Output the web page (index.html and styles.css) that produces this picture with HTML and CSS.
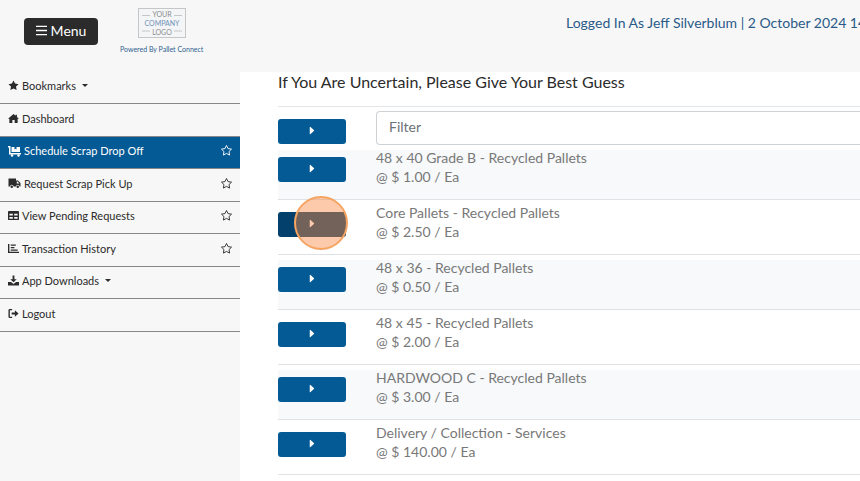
FILE: index.html
```html
<!DOCTYPE html>
<html lang="en">
<head>
    <meta charset="UTF-8">
    <meta name="viewport" content="width=device-width, initial-scale=1.0">
    <title>Schedule Scrap Drop Off</title>
    <link rel="stylesheet" href="styles.css">
</head>
<body>
    <!-- shared icons -->
    <svg class="sprite" aria-hidden="true">
        <symbol id="star" viewBox="0 0 24 24"><path d="M12 1l3.400 6.900 7.600 1.100-5.500 5.400 1.300 7.600L12 18.400 5.200 22l1.300-7.600L1 9l7.600-1.100z"/></symbol>
        <symbol id="play" viewBox="0 0 8 12"><path d="M1 1.500v9q0 1 1 .3l4.500-4.100q.8-.7 0-1.400L2 1.200q-1-.7-1 .3z"/></symbol>
    </svg>

    <header class="topbar">
        <button type="button" class="menu-button">
            <svg class="menu-icon" viewBox="0 0 12 12"><path d="M0 1.500h12M0 6h12M0 10.500h12"/></svg>
            Menu
        </button>
        <a href="#" class="brand">
            <svg class="logo" viewBox="0 0 50 32" role="img" aria-label="Your Company Logo">
                <rect class="logo-frame" x="1.500" y="1.500" width="47" height="29"/>
                <path class="logo-lines" d="M5 8.500h8M37 8.500h8M5 24h8M37 24h8"/>
                <text x="25" y="10">YOUR</text>
                <text x="25" y="19" class="logo-blue">COMPANY</text>
                <text x="25" y="28">LOGO</text>
            </svg>
            <span>Powered By Pallet Connect</span>
        </a>
        <div class="login-info">Logged In As Jeff Silverblum | 2 October 2024 14:05</div>
    </header>

    <div class="page">
        <nav class="sidebar">
            <ul>
                <li><a href="#">
                    <svg class="icon" viewBox="0 0 24 24"><use href="#star"/></svg>
                    Bookmarks <span class="caret"></span>
                </a></li>
                <li><a href="#">
                    <svg class="icon" viewBox="0 0 24 24"><path d="M12 2L0 12.500h3V22h6.500v-7h5v7H21v-9.500h3L19.500 8.500V4h-3v2z"/></svg>
                    Dashboard
                </a></li>
                <li class="active">
                    <a href="#">
                        <svg class="icon wide" viewBox="0 0 26 24"><path d="M0 2h5v14h21v3H2V5H0zM7 4h6v5l2-1.500L17 9V4h7v10H7z"/><circle cx="8" cy="21" r="2.500"/><circle cx="21" cy="21" r="2.500"/></svg>
                        Schedule Scrap Drop Off
                    </a>
                    <button type="button" class="bookmark" aria-label="Bookmark"><svg viewBox="0 0 24 24"><use href="#star"/></svg></button>
                </li>
                <li>
                    <a href="#">
                        <svg class="icon wide" viewBox="0 0 26 24"><path d="M1 3h15v4h4l5 5v7h-2a3.500 3.500 0 0 0-7 0h-5a3.500 3.500 0 0 0-7 0H1zM17.500 9v4H23l-4-4z" fill-rule="evenodd"/><circle cx="7.500" cy="19.500" r="2.500"/><circle cx="19.500" cy="19.500" r="2.500"/></svg>
                        Request Scrap Pick Up
                    </a>
                    <button type="button" class="bookmark" aria-label="Bookmark"><svg viewBox="0 0 24 24"><use href="#star"/></svg></button>
                </li>
                <li>
                    <a href="#">
                        <svg class="icon" viewBox="0 0 24 24"><path fill-rule="evenodd" d="M2 2h20q2 0 2 2v16q0 2-2 2H2q-2 0-2-2V4q0-2 2-2zM3 8v4h7.500V8zM13.500 8v4H21V8zM3 15v4h7.500v-4zM13.500 15v4H21v-4z"/></svg>
                        View Pending Requests
                    </a>
                    <button type="button" class="bookmark" aria-label="Bookmark"><svg viewBox="0 0 24 24"><use href="#star"/></svg></button>
                </li>
                <li>
                    <a href="#">
                        <svg class="icon" viewBox="0 0 24 24"><path d="M0 2h3v17h21v3H0zM6 3h11v3H6zM6 8.500h8v3H6zM6 14h15v3H6z"/></svg>
                        Transaction History
                    </a>
                    <button type="button" class="bookmark" aria-label="Bookmark"><svg viewBox="0 0 24 24"><use href="#star"/></svg></button>
                </li>
                <li><a href="#">
                    <svg class="icon" viewBox="0 0 24 24"><path d="M10 1h4v8h5l-7 7-7-7h5zM0 15h6.500l5.500 4.500 5.500-4.500H24v8H0z"/></svg>
                    App Downloads <span class="caret"></span>
                </a></li>
                <li><a href="#">
                    <svg class="icon" viewBox="0 0 24 24"><path d="M9 2v3H4v14h5v3H4q-3 0-3-3V5q0-3 3-3zM15 5l8 7-8 7v-5H8v-4h7z"/></svg>
                    Logout
                </a></li>
            </ul>
        </nav>

        <main class="content">
            <h1>If You Are Uncertain, Please Give Your Best Guess</h1>
            <div class="filter-row">
                <button type="button" class="go" aria-label="Apply filter"><svg viewBox="0 0 8 12"><use href="#play"/></svg></button>
                <input type="text" class="filter" placeholder="Filter" aria-label="Filter">
            </div>
            <div class="item">
                <button type="button" class="go" aria-label="Select"><svg viewBox="0 0 8 12"><use href="#play"/></svg></button>
                <p>48 x 40 Grade B - Recycled Pallets<br>@ $ 1.00 / Ea</p>
            </div>
            <div class="item">
                <button type="button" class="go pressed" aria-label="Select"><svg viewBox="0 0 8 12"><use href="#play"/></svg></button>
                <p>Core Pallets - Recycled Pallets<br>@ $ 2.50 / Ea</p>
            </div>
            <div class="item">
                <button type="button" class="go" aria-label="Select"><svg viewBox="0 0 8 12"><use href="#play"/></svg></button>
                <p>48 x 36 - Recycled Pallets<br>@ $ 0.50 / Ea</p>
            </div>
            <div class="item">
                <button type="button" class="go" aria-label="Select"><svg viewBox="0 0 8 12"><use href="#play"/></svg></button>
                <p>48 x 45 - Recycled Pallets<br>@ $ 2.00 / Ea</p>
            </div>
            <div class="item">
                <button type="button" class="go" aria-label="Select"><svg viewBox="0 0 8 12"><use href="#play"/></svg></button>
                <p>HARDWOOD C - Recycled Pallets<br>@ $ 3.00 / Ea</p>
            </div>
            <div class="item">
                <button type="button" class="go" aria-label="Select"><svg viewBox="0 0 8 12"><use href="#play"/></svg></button>
                <p>Delivery / Collection - Services<br>@ $ 140.00 / Ea</p>
            </div>
        </main>
    </div>
</body>
</html>
```
FILE: styles.css
```css
*,
*::after {
    box-sizing: border-box;
}
body {
    display: flex;
    flex-direction: column;
    min-height: 100vh;
    margin: 0;
    font-family: Lato, "Open Sans", sans-serif;
    font-size: 14px;
    color: #2b2b2b;
    background-color: #f7f7f7;
    overflow-x: hidden;
}
button {
    font-family: inherit;
    border: none;
    cursor: pointer;
}
a {
    color: inherit;
    text-decoration: none;
}
.sprite {
    display: none;
}

/* top bar */
.topbar {
    display: flex;
    align-items: flex-start;
    height: 72px;
    padding-left: 24px;
}
.menu-button {
    display: flex;
    align-items: center;
    justify-content: center;
    gap: 4px;
    width: 74px;
    height: 27px;
    margin-top: 18px;
    padding: 0 0 2px;
    font-size: 14px;
    color: #fff;
    background-color: #2b2b2b;
    border-radius: 4px;
}
.menu-icon {
    width: 11px;
    height: 11px;
    stroke: #fff;
    stroke-width: 1.6;
}
.brand {
    display: flex;
    flex-direction: column;
    align-items: center;
    gap: 5px;
    margin: 7px 0 0 22px;
    font-size: 7px;
    line-height: 10px;
    color: #2f5f8f;
    white-space: nowrap;
}
.logo {
    width: 50px;
    height: 32px;
}
.logo-frame {
    fill: #f4f5f6;
    stroke: #c4c6c8;
}
.logo-lines {
    stroke: #c4c6c8;
}
.logo text {
    font-size: 7px;
    line-height: 8px;
    text-anchor: middle;
    fill: #8b8e91;
}
.logo .logo-blue {
    fill: #6f93b8;
}
.login-info {
    flex: 0 0 294px;
    margin: 13px 0 0 auto;
    line-height: 20px;
    color: #2a5a88;
    white-space: nowrap;
    overflow: hidden;
}

.page {
    display: flex;
    flex: 1;
}

/* sidebar */
.sidebar {
    flex: 0 0 240px;
    font-size: 11px;
}
.sidebar ul {
    list-style: none;
    margin: 0;
    padding: 0;
}
.sidebar li {
    display: flex;
    align-items: center;
    justify-content: space-between;
    height: 32px;
    padding: 0 8px 4px;
    border-bottom: 1px solid #888;
}
.sidebar li:nth-child(even) {
    height: 33px;
}
.sidebar a {
    display: flex;
    align-items: center;
    gap: 3px;
}
.sidebar .active {
    color: #fff;
    background-color: #045a94;
}
.icon {
    width: 11px;
    height: 11px;
    fill: currentColor;
}
.wide {
    width: 13px;
    height: 12px;
}
.caret {
    margin-left: 3px;
    border: 3px solid transparent;
    border-top-color: currentColor;
    border-bottom: 0;
}
.bookmark {
    display: flex;
    padding: 0;
    color: inherit;
    background: none;
}
.bookmark svg {
    width: 11px;
    height: 11px;
    fill: none;
    stroke: currentColor;
    stroke-width: 2;
    overflow: visible;
}

/* item list */
.content {
    flex: 1;
    min-width: 0;
    padding-left: 38px;
    background-color: #fff;
}
h1 {
    margin: 0;
    padding-bottom: 14px;
    font-size: 16px;
    font-weight: normal;
    line-height: 20px;
}
.filter-row,
.item {
    display: grid;
    grid-template-columns: 68px 1fr;
    column-gap: 30px;
}
.filter-row {
    padding-top: 4px;
    border-top: 1px solid #e3e5e7;
}
.go {
    position: relative;
    display: flex;
    align-items: center;
    justify-content: center;
    height: 25px;
    margin-top: 8px;
    padding: 0 0 3px;
    background-color: #045a94;
    border-radius: 3px;
}
.go svg {
    width: 6px;
    height: 9px;
    fill: #fff;
}
.pressed {
    background-color: #03406b;
}
/* click highlight */
.pressed::after {
    content: "";
    position: absolute;
    top: -16px;
    left: 16px;
    width: 54px;
    height: 54px;
    border: 2px solid #f5a462;
    border-radius: 50%;
    background-color: rgba(250, 140, 70, 0.45);
}
.filter {
    width: 100%;
    height: 34px;
    padding: 0 12px 4px;
    font-family: inherit;
    font-size: 14px;
    border: 1px solid #ced2d5;
    border-right: 0;
    border-radius: 4px 0 0 4px;
}
.filter::placeholder {
    color: #6c7176;
}
.item {
    height: 50px;
    margin-top: 5px;
    color: #787878;
    border-bottom: 1px solid #dfe2e5;
}
.item:nth-child(odd) {
    background-color: #f7f9fb;
}
.item .go {
    margin-top: 7px;
}
.item p {
    margin: -2px 0 0;
    line-height: 19px;
}
```
